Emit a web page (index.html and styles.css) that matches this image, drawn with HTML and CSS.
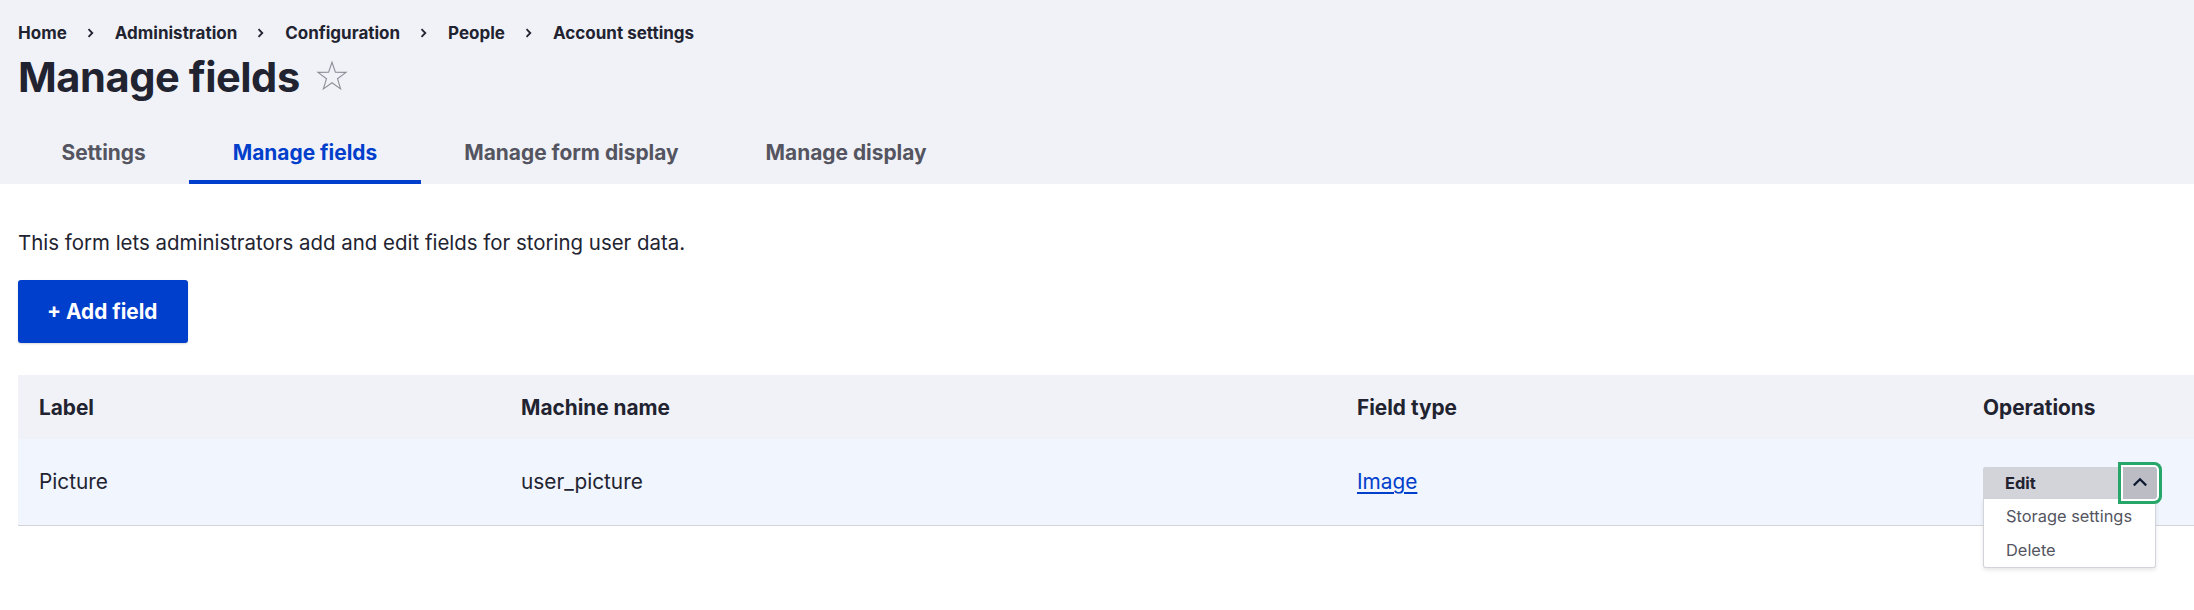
FILE: index.html
```html
<!DOCTYPE html>
<html lang="en">
<head>
<meta charset="utf-8">
<title>Manage fields</title>
<link rel="stylesheet" href="styles.css">
</head>
<body>
<header class="page-header">
  <nav class="breadcrumb" aria-label="Breadcrumb">
    <ol class="breadcrumb-list">
      <li class="crumb"><a href="#">Home</a></li>
      <li class="sep"><svg viewBox="0 0 7 10" width="7" height="10"><path d="M1.5 1.2 L5.3 5 L1.5 8.8" fill="none" stroke="#222330" stroke-width="1.8"/></svg></li>
      <li class="crumb"><a href="#">Administration</a></li>
      <li class="sep"><svg viewBox="0 0 7 10" width="7" height="10"><path d="M1.5 1.2 L5.3 5 L1.5 8.8" fill="none" stroke="#222330" stroke-width="1.8"/></svg></li>
      <li class="crumb"><a href="#">Configuration</a></li>
      <li class="sep"><svg viewBox="0 0 7 10" width="7" height="10"><path d="M1.5 1.2 L5.3 5 L1.5 8.8" fill="none" stroke="#222330" stroke-width="1.8"/></svg></li>
      <li class="crumb"><a href="#">People</a></li>
      <li class="sep"><svg viewBox="0 0 7 10" width="7" height="10"><path d="M1.5 1.2 L5.3 5 L1.5 8.8" fill="none" stroke="#222330" stroke-width="1.8"/></svg></li>
      <li class="crumb"><a href="#">Account settings</a></li>
    </ol>
  </nav>
  <div class="title-row">
    <h1 class="page-title">Manage fields</h1>
    <svg class="star" viewBox="0 0 32 32" width="32" height="32" aria-hidden="true">
      <path d="M16 2.2 L19.4 12.3 L30 12.4 L21.5 18.7 L24.6 28.9 L16 22.7 L7.4 28.9 L10.5 18.7 L2 12.4 L12.6 12.3 Z" fill="none" stroke="#8d8f98" stroke-width="1.1" stroke-linejoin="miter"/>
    </svg>
  </div>
  <nav class="tabs">
    <a class="tab" href="#">Settings</a>
    <a class="tab is-active" href="#">Manage fields</a>
    <a class="tab" href="#">Manage form display</a>
    <a class="tab" href="#">Manage display</a>
  </nav>
</header>
<main class="content">
  <p class="description">This form lets administrators add and edit fields for storing user data.</p>
  <div class="actions"><a class="button" href="#">+ Add field</a></div>
  <table class="fields-table">
    <colgroup>
      <col class="col-label">
      <col class="col-machine">
      <col class="col-type">
      <col class="col-ops">
    </colgroup>
    <thead>
      <tr>
        <th>Label</th>
        <th>Machine name</th>
        <th>Field type</th>
        <th>Operations</th>
      </tr>
    </thead>
    <tbody>
      <tr>
        <td>Picture</td>
        <td>user_picture</td>
        <td><a class="type-link" href="#">Image</a></td>
        <td>
          <div class="dropbutton">
            <div class="dropbutton-bar">
              <a class="dropbutton-main" href="#">Edit</a>
              <button class="dropbutton-toggle" type="button" aria-label="List additional actions">
                <svg viewBox="0 0 16 10" width="16" height="10"><path d="M1.8 8.4 L8 2.2 L14.2 8.4" fill="none" stroke="#111a33" stroke-width="2.2"/></svg>
              </button>
            </div>
            <ul class="dropbutton-menu">
              <li><a href="#">Storage settings</a></li>
              <li><a href="#">Delete</a></li>
            </ul>
          </div>
        </td>
      </tr>
    </tbody>
  </table>
</main>
</body>
</html>
```

FILE: styles.css
```css
* { box-sizing: border-box; }

html, body {
  margin: 0;
  padding: 0;
  background: #ffffff;
  font-family: Inter, "Noto Sans", "Liberation Sans", sans-serif;
  color: #222330;
}

body {
  min-height: 610px;
}

a { color: inherit; text-decoration: none; }

.page-header {
  background: #f1f2f7;
  padding: 23px 0 0 18px;
  height: 184px;
}

.breadcrumb-list {
  list-style: none;
  margin: 0;
  padding: 0;
  display: flex;
  align-items: center;
  height: 20px;
  font-size: 17px;
  line-height: 20px;
  font-weight: 700;
}

.sep {
  display: flex;
  align-items: center;
  margin: 0 21px 0 20px;
}

.title-row {
  display: flex;
  align-items: center;
  margin-top: 9px;
  height: 50px;
}

.page-title {
  margin: 0;
  font-size: 41.6px;
  line-height: 50px;
  font-weight: 700;
  letter-spacing: -0.45px;
}

.star {
  margin-left: 16px;
  margin-top: -2px;
}

.tabs {
  display: flex;
  margin-top: 19px;
  height: 63px;
}

.tab {
  display: flex;
  align-items: center;
  padding: 4px 43.5px 0;
  font-size: 20.9px;
  font-weight: 700;
  color: #545560;
  border-bottom: 4px solid transparent;
}

.tab.is-active {
  color: #003ecc;
  border-bottom-color: #003ecc;
}

.content {
  padding: 0 0 0 18px;
}

.description {
  margin: 44px 0 0;
  font-size: 20.45px;
  line-height: 30px;
}

.actions {
  margin-top: 22px;
  display: flex;
}

.button {
  display: flex;
  align-items: center;
  height: 63px;
  padding: 0 31px 0 29px;
  background: #003ecc;
  color: #ffffff;
  font-size: 20.8px;
  font-weight: 700;
  border-radius: 3px;
  box-shadow: 0 1px 2px rgba(0, 0, 0, 0.15);
}

.fields-table {
  margin-top: 32px;
  border-collapse: collapse;
  width: 2176px;
  table-layout: fixed;
}

.col-label { width: 482px; }
.col-machine { width: 836px; }
.col-type { width: 626px; }
.col-ops { width: 232px; }

.fields-table th {
  background: #f1f2f7;
  height: 64px;
  padding: 0 21px;
  text-align: left;
  font-size: 20.8px;
  font-weight: 700;
  vertical-align: middle;
}

.fields-table td {
  background: #f1f5fd;
  height: 86px;
  padding: 0 21px;
  font-size: 20.8px;
  vertical-align: middle;
  border-bottom: 1px solid #d3d4d9;
}

.type-link {
  color: #003ecc;
  text-decoration: underline;
  text-decoration-thickness: 2px;
  text-underline-offset: 3px;
}

.dropbutton {
  position: relative;
  width: 174px;
  margin-top: 2px;
}

.dropbutton-bar {
  display: flex;
  height: 32px;
}

.dropbutton-main {
  flex: 1;
  display: flex;
  align-items: center;
  padding-left: 22px;
  background: #d3d4d9;
  font-size: 16.4px;
  font-weight: 700;
  color: #222330;
  border-radius: 2px 0 0 0;
}

.dropbutton-toggle {
  width: 34px;
  height: 32px;
  border: 0;
  padding: 0;
  margin: 0;
  background: #bcbdc4;
  border-radius: 0 3px 3px 0;
  display: flex;
  align-items: center;
  justify-content: center;
  box-shadow: 0 0 0 2px #ffffff, 0 0 0 5px #26a769;
  position: relative;
  z-index: 2;
}

.dropbutton-toggle svg { margin-top: -1px; }

.dropbutton-menu {
  position: absolute;
  left: 0;
  top: 32px;
  width: 173px;
  margin: 0;
  padding: 0;
  list-style: none;
  background: #ffffff;
  border: 1px solid #d3d4d9;
  border-top: 0;
  border-radius: 0 0 3px 3px;
  box-shadow: 0 2px 4px rgba(0, 0, 0, 0.1);
  z-index: 1;
}

.dropbutton-menu li a {
  display: flex;
  align-items: center;
  height: 34px;
  padding-left: 22px;
  font-size: 16.4px;
  color: #545560;
}
```
